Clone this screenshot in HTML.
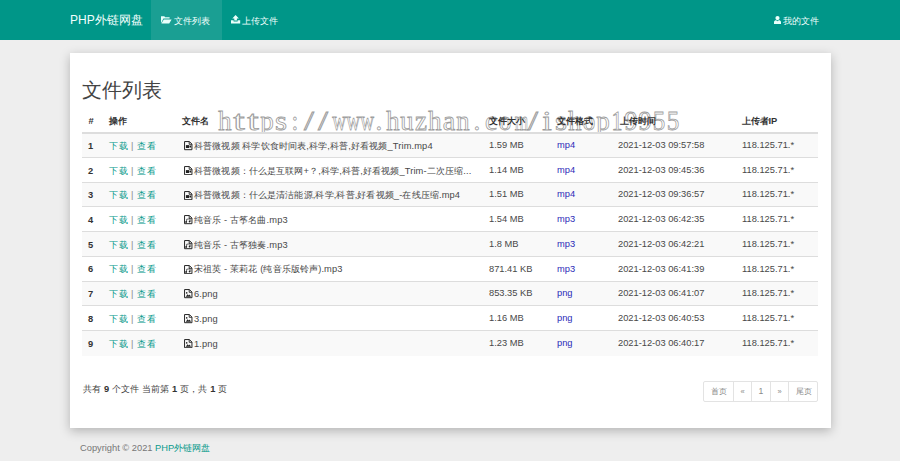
<!DOCTYPE html>
<html><head><meta charset="utf-8">
<style>
*{margin:0;padding:0;box-sizing:border-box}
html,body{width:900px;height:461px;overflow:hidden}
body{background:#eeeeee;font-family:"Liberation Sans",sans-serif;color:#333;position:relative}
.nav{position:absolute;left:0;top:0;width:900px;height:40px;background:#009688}
.nav .t{position:absolute;color:#f2fffd;white-space:nowrap}
.brand{left:70px;top:12px;font-size:12px;line-height:16px}
.act{position:absolute;left:151px;top:0;width:71px;height:40px;background:#1a9f93}
.ni{font-size:9.3px;line-height:14px;top:13.9px}
.nic{position:absolute}
.card{position:absolute;left:70px;top:53px;width:761px;height:375px;background:#fff;box-shadow:0 3px 10px rgba(0,0,0,.25)}
h1{position:absolute;left:82px;top:78px;font-size:20px;line-height:24px;font-weight:normal;color:#444;white-space:nowrap}
.tbl{position:absolute;left:82px;top:108px;width:736px}
.hd{position:absolute;left:0;top:0;width:736px;height:26px;border-bottom:2px solid #ddd;z-index:4}
.c{position:absolute;white-space:nowrap;font-size:9.3px;line-height:14px}
.hd .c{font-weight:bold;top:5.5px;color:#333}
.rows{position:absolute;left:0;top:0;width:736px;z-index:3}
.r{position:absolute;left:0;width:736px;height:24.71px;border-top:1px solid #ddd;background:#fff}
.r.s{background:#f9f9f9}
.r .c{top:5.6px;color:#484848}
.r .num{font-weight:bold;color:#333}
.op{font-size:9.3px!important;letter-spacing:.5px}
.sep{color:#888;margin:0 3.2px 0 3px}
a{color:#009688;text-decoration:none}
.r .fmt{color:#2b2bb8}
.r .lt{top:4.8px}
.ic{position:absolute;left:0;top:2.4px}
.nm span{position:absolute;left:10px;top:0;letter-spacing:.13px}
.wm{position:absolute;left:218px;top:105.5px;height:30px;font-family:"Liberation Serif",serif;font-size:27.8px;line-height:30px;color:#fff;-webkit-text-stroke:0.8px #9c9c9c;white-space:nowrap;z-index:2}
.wm b{display:inline-block;width:14px;text-align:center;font-weight:normal}
.foot{position:absolute;left:83px;top:382.3px;font-size:9.3px;line-height:14px;white-space:nowrap;color:#444;letter-spacing:.12px}
.foot b{color:#333}
.pg{position:absolute;left:703px;top:381px;width:115px;height:21px;border:1px solid #e3e3e3;border-radius:2px}
.pg span{position:absolute;top:0;height:19px;line-height:19px;font-size:8px;color:#8a8a8a;text-align:center}
.pg i{position:absolute;top:0;width:1px;height:19px;background:#e3e3e3}
.copy{position:absolute;left:80px;top:440.6px;font-size:9.3px;line-height:14px;color:#777;white-space:nowrap}
.copy a{color:#0a9a8c}
</style></head><body>
<div class="nav">
  <div class="t brand">PHP外链网盘</div>
  <div class="act"></div>
  <svg class="nic" style="left:161px;top:16px" width="11" height="8" viewBox="0 0 11 8"><path d="M0 0.3 H3.3 L4.2 1.2 H8.6 V2.6 H2.4 L0 7.2Z" fill="#eafffb"/><path d="M2.8 3.4 H10.6 L8.2 7.6 H0.4Z" fill="#eafffb"/></svg>
  <div class="t ni" style="left:173.5px">文件列表</div>
  <svg class="nic" style="left:231px;top:15.3px" width="10" height="9" viewBox="0 0 10 9"><path d="M4.6 0 L7.9 3.4 H5.9 V5.6 H3.3 V3.4 H1.3Z" fill="#eafffb"/><path d="M0 5.3 H2.6 V6.4 H6.6 V5.3 H9.2 V8.5 H0Z" fill="#eafffb"/></svg>
  <div class="t ni" style="left:241.5px">上传文件</div>
  <svg class="nic" style="left:774px;top:16px" width="7" height="8" viewBox="0 0 7 8"><circle cx="3.5" cy="2.1" r="2.1" fill="#eafffb"/><path d="M0 8 V6.2 C0 4.8 1.2 4.2 2.2 4.2 L3.5 5.2 L4.8 4.2 C5.8 4.2 7 4.8 7 6.2 V8Z" fill="#eafffb"/></svg>
  <div class="t ni" style="left:782.5px">我的文件</div>
</div>
<div class="card"></div>
<h1>文件列表</h1>
<div class="tbl">
  <div class="hd">
    <div class="c" style="left:6.5px">#</div>
    <div class="c" style="left:27px">操作</div>
    <div class="c" style="left:100px">文件名</div>
    <div class="c" style="left:407px">文件大小</div>
    <div class="c" style="left:475px">文件格式</div>
    <div class="c" style="left:537.5px">上传时间</div>
    <div class="c" style="left:659.5px">上传者IP</div>
  </div>
<div class="rows">
<div class="r s" style="top:24.25px">
<div class="c num" style="left:6px">1</div>
<div class="c op" style="left:27px"><a>下载</a><span class="sep">|</span><a>查看</a></div>
<div class="c nm" style="left:102px"><svg class="ic" width="8.5" height="9.5" viewBox="0 0 8.5 9.5"><path d="M.55 .55 H5.4 L7.95 3.1 V8.7 H.55Z" fill="none" stroke="#262626" stroke-width="1"/><path d="M5.2 .6 V3.3 H7.9" fill="none" stroke="#222" stroke-width=".9"/><rect x="1.9" y="4.1" width="3.4" height="2.9" fill="#222"/><path d="M5.3 5.5 L7.1 4.1 V7Z" fill="#222"/></svg><span>科普微视频 科学饮食时间表,科学,科普,好看视频_Trim.mp4</span></div>
<div class="c lt" style="left:407px">1.59 MB</div>
<div class="c fmt lt" style="left:475px">mp4</div>
<div class="c lt" style="left:536px">2021-12-03 09:57:58</div>
<div class="c lt" style="left:660px">118.125.71.*</div>
</div>
<div class="r" style="top:48.96px">
<div class="c num" style="left:6px">2</div>
<div class="c op" style="left:27px"><a>下载</a><span class="sep">|</span><a>查看</a></div>
<div class="c nm" style="left:102px"><svg class="ic" width="8.5" height="9.5" viewBox="0 0 8.5 9.5"><path d="M.55 .55 H5.4 L7.95 3.1 V8.7 H.55Z" fill="none" stroke="#262626" stroke-width="1"/><path d="M5.2 .6 V3.3 H7.9" fill="none" stroke="#222" stroke-width=".9"/><rect x="1.9" y="4.1" width="3.4" height="2.9" fill="#222"/><path d="M5.3 5.5 L7.1 4.1 V7Z" fill="#222"/></svg><span>科普微视频：什么是互联网+？,科学,科普,好看视频_Trim-二次压缩...</span></div>
<div class="c lt" style="left:407px">1.14 MB</div>
<div class="c fmt lt" style="left:475px">mp4</div>
<div class="c lt" style="left:536px">2021-12-03 09:45:36</div>
<div class="c lt" style="left:660px">118.125.71.*</div>
</div>
<div class="r s" style="top:73.67px">
<div class="c num" style="left:6px">3</div>
<div class="c op" style="left:27px"><a>下载</a><span class="sep">|</span><a>查看</a></div>
<div class="c nm" style="left:102px"><svg class="ic" width="8.5" height="9.5" viewBox="0 0 8.5 9.5"><path d="M.55 .55 H5.4 L7.95 3.1 V8.7 H.55Z" fill="none" stroke="#262626" stroke-width="1"/><path d="M5.2 .6 V3.3 H7.9" fill="none" stroke="#222" stroke-width=".9"/><rect x="1.9" y="4.1" width="3.4" height="2.9" fill="#222"/><path d="M5.3 5.5 L7.1 4.1 V7Z" fill="#222"/></svg><span>科普微视频：什么是清洁能源,科学,科普,好看视频_-在线压缩.mp4</span></div>
<div class="c lt" style="left:407px">1.51 MB</div>
<div class="c fmt lt" style="left:475px">mp4</div>
<div class="c lt" style="left:536px">2021-12-03 09:36:57</div>
<div class="c lt" style="left:660px">118.125.71.*</div>
</div>
<div class="r" style="top:98.38px">
<div class="c num" style="left:6px">4</div>
<div class="c op" style="left:27px"><a>下载</a><span class="sep">|</span><a>查看</a></div>
<div class="c nm" style="left:102px"><svg class="ic" width="8.5" height="9.5" viewBox="0 0 8.5 9.5"><path d="M.55 .55 H5.4 L7.95 3.1 V8.7 H.55Z" fill="none" stroke="#262626" stroke-width="1"/><path d="M5.2 .6 V3.3 H7.9" fill="none" stroke="#222" stroke-width=".9"/><path d="M2.6 7 V4.3 L6.1 3.7 V6.4" stroke="#222" stroke-width=".7" fill="none"/><circle cx="2.1" cy="7" r=".9" fill="#222"/><circle cx="5.6" cy="6.5" r=".9" fill="#222"/></svg><span>纯音乐 - 古筝名曲.mp3</span></div>
<div class="c lt" style="left:407px">1.54 MB</div>
<div class="c fmt lt" style="left:475px">mp3</div>
<div class="c lt" style="left:536px">2021-12-03 06:42:35</div>
<div class="c lt" style="left:660px">118.125.71.*</div>
</div>
<div class="r s" style="top:123.09px">
<div class="c num" style="left:6px">5</div>
<div class="c op" style="left:27px"><a>下载</a><span class="sep">|</span><a>查看</a></div>
<div class="c nm" style="left:102px"><svg class="ic" width="8.5" height="9.5" viewBox="0 0 8.5 9.5"><path d="M.55 .55 H5.4 L7.95 3.1 V8.7 H.55Z" fill="none" stroke="#262626" stroke-width="1"/><path d="M5.2 .6 V3.3 H7.9" fill="none" stroke="#222" stroke-width=".9"/><path d="M2.6 7 V4.3 L6.1 3.7 V6.4" stroke="#222" stroke-width=".7" fill="none"/><circle cx="2.1" cy="7" r=".9" fill="#222"/><circle cx="5.6" cy="6.5" r=".9" fill="#222"/></svg><span>纯音乐 - 古筝独奏.mp3</span></div>
<div class="c lt" style="left:407px">1.8 MB</div>
<div class="c fmt lt" style="left:475px">mp3</div>
<div class="c lt" style="left:536px">2021-12-03 06:42:21</div>
<div class="c lt" style="left:660px">118.125.71.*</div>
</div>
<div class="r" style="top:147.80px">
<div class="c num" style="left:6px">6</div>
<div class="c op" style="left:27px"><a>下载</a><span class="sep">|</span><a>查看</a></div>
<div class="c nm" style="left:102px"><svg class="ic" width="8.5" height="9.5" viewBox="0 0 8.5 9.5"><path d="M.55 .55 H5.4 L7.95 3.1 V8.7 H.55Z" fill="none" stroke="#262626" stroke-width="1"/><path d="M5.2 .6 V3.3 H7.9" fill="none" stroke="#222" stroke-width=".9"/><path d="M2.6 7 V4.3 L6.1 3.7 V6.4" stroke="#222" stroke-width=".7" fill="none"/><circle cx="2.1" cy="7" r=".9" fill="#222"/><circle cx="5.6" cy="6.5" r=".9" fill="#222"/></svg><span>宋祖英 - 茉莉花 (纯音乐版铃声).mp3</span></div>
<div class="c lt" style="left:407px">871.41 KB</div>
<div class="c fmt lt" style="left:475px">mp3</div>
<div class="c lt" style="left:536px">2021-12-03 06:41:39</div>
<div class="c lt" style="left:660px">118.125.71.*</div>
</div>
<div class="r s" style="top:172.51px">
<div class="c num" style="left:6px">7</div>
<div class="c op" style="left:27px"><a>下载</a><span class="sep">|</span><a>查看</a></div>
<div class="c nm" style="left:102px"><svg class="ic" width="8.5" height="9.5" viewBox="0 0 8.5 9.5"><path d="M.55 .55 H5.4 L7.95 3.1 V8.7 H.55Z" fill="none" stroke="#262626" stroke-width="1"/><path d="M5.2 .6 V3.3 H7.9" fill="none" stroke="#222" stroke-width=".9"/><path d="M1.7 7.7 L3.6 5.2 L4.8 6.4 L5.7 5.6 L7 7.7Z" fill="#222"/><circle cx="2.7" cy="3.9" r=".8" fill="#222"/></svg><span>6.png</span></div>
<div class="c lt" style="left:407px">853.35 KB</div>
<div class="c fmt lt" style="left:475px">png</div>
<div class="c lt" style="left:536px">2021-12-03 06:41:07</div>
<div class="c lt" style="left:660px">118.125.71.*</div>
</div>
<div class="r" style="top:197.22px">
<div class="c num" style="left:6px">8</div>
<div class="c op" style="left:27px"><a>下载</a><span class="sep">|</span><a>查看</a></div>
<div class="c nm" style="left:102px"><svg class="ic" width="8.5" height="9.5" viewBox="0 0 8.5 9.5"><path d="M.55 .55 H5.4 L7.95 3.1 V8.7 H.55Z" fill="none" stroke="#262626" stroke-width="1"/><path d="M5.2 .6 V3.3 H7.9" fill="none" stroke="#222" stroke-width=".9"/><path d="M1.7 7.7 L3.6 5.2 L4.8 6.4 L5.7 5.6 L7 7.7Z" fill="#222"/><circle cx="2.7" cy="3.9" r=".8" fill="#222"/></svg><span>3.png</span></div>
<div class="c lt" style="left:407px">1.16 MB</div>
<div class="c fmt lt" style="left:475px">png</div>
<div class="c lt" style="left:536px">2021-12-03 06:40:53</div>
<div class="c lt" style="left:660px">118.125.71.*</div>
</div>
<div class="r s" style="top:221.93px;height:25.6px">
<div class="c num" style="left:6px">9</div>
<div class="c op" style="left:27px"><a>下载</a><span class="sep">|</span><a>查看</a></div>
<div class="c nm" style="left:102px"><svg class="ic" width="8.5" height="9.5" viewBox="0 0 8.5 9.5"><path d="M.55 .55 H5.4 L7.95 3.1 V8.7 H.55Z" fill="none" stroke="#262626" stroke-width="1"/><path d="M5.2 .6 V3.3 H7.9" fill="none" stroke="#222" stroke-width=".9"/><path d="M1.7 7.7 L3.6 5.2 L4.8 6.4 L5.7 5.6 L7 7.7Z" fill="#222"/><circle cx="2.7" cy="3.9" r=".8" fill="#222"/></svg><span>1.png</span></div>
<div class="c lt" style="left:407px">1.23 MB</div>
<div class="c fmt lt" style="left:475px">png</div>
<div class="c lt" style="left:536px">2021-12-03 06:40:17</div>
<div class="c lt" style="left:660px">118.125.71.*</div>
</div>
</div>
</div>
<div class="wm"><b style="transform:scaleX(0.957)">h</b><b style="transform:scaleX(1.489)">t</b><b style="transform:scaleX(1.489)">t</b><b style="transform:scaleX(0.971)">p</b><b style="transform:scaleX(1.109)">s</b><b style="transform:scaleX(0.880)">:</b><b style="transform:scaleX(1.295)">/</b><b style="transform:scaleX(1.295)">/</b><b style="transform:scaleX(0.687)">w</b><b style="transform:scaleX(0.687)">w</b><b style="transform:scaleX(0.687)">w</b><b style="transform:scaleX(0.978)">.</b><b style="transform:scaleX(0.957)">h</b><b style="transform:scaleX(0.957)">u</b><b style="transform:scaleX(0.973)">z</b><b style="transform:scaleX(0.957)">h</b><b style="transform:scaleX(1.013)">a</b><b style="transform:scaleX(0.957)">n</b><b style="transform:scaleX(0.978)">.</b><b style="transform:scaleX(0.973)">c</b><b style="transform:scaleX(0.899)">o</b><b style="transform:scaleX(0.624)">m</b><b style="transform:scaleX(1.295)">/</b><b style="transform:scaleX(1.230)">i</b><b style="transform:scaleX(1.109)">s</b><b style="transform:scaleX(0.957)">h</b><b style="transform:scaleX(0.899)">o</b><b style="transform:scaleX(0.971)">p</b><b style="transform:scaleX(0.791)">1</b><b style="transform:scaleX(0.935)">9</b><b style="transform:scaleX(0.935)">9</b><b style="transform:scaleX(0.899)">5</b><b style="transform:scaleX(0.899)">5</b></div>
<div class="foot">共有 <b>9</b> 个文件 当前第 <b>1</b> 页，共 <b>1</b> 页</div>
<div class="pg">
<span style="left:0;width:29px">首页</span><i style="left:29px"></i>
<span style="left:30px;width:17px;font-size:7.5px">&laquo;</span><i style="left:47px"></i>
<span style="left:48px;width:18px;font-size:8.6px">1</span><i style="left:66px"></i>
<span style="left:67px;width:17px;font-size:7.5px">&raquo;</span><i style="left:84px"></i>
<span style="left:85px;width:29px">尾页</span>
</div>
<div class="copy">Copyright © 2021 <a>PHP外链网盘</a></div>
</body></html>
